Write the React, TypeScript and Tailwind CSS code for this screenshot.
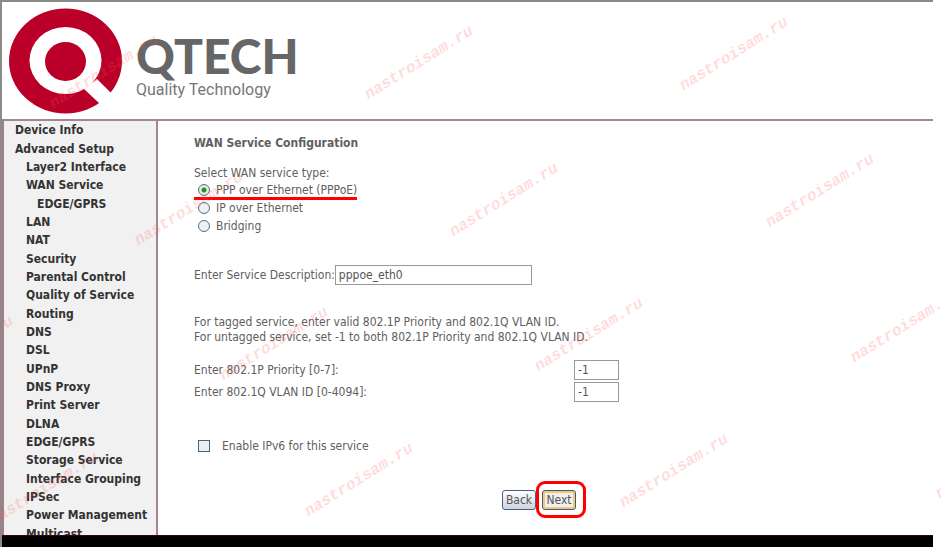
import React, { useState } from 'react';
import { clsx } from 'clsx';

interface MenuItem {
  label: string;
  level: 0 | 1 | 2;
}

const menu: MenuItem[] = [
  { label: 'Device Info', level: 0 },
  { label: 'Advanced Setup', level: 0 },
  { label: 'Layer2 Interface', level: 1 },
  { label: 'WAN Service', level: 1 },
  { label: 'EDGE/GPRS', level: 2 },
  { label: 'LAN', level: 1 },
  { label: 'NAT', level: 1 },
  { label: 'Security', level: 1 },
  { label: 'Parental Control', level: 1 },
  { label: 'Quality of Service', level: 1 },
  { label: 'Routing', level: 1 },
  { label: 'DNS', level: 1 },
  { label: 'DSL', level: 1 },
  { label: 'UPnP', level: 1 },
  { label: 'DNS Proxy', level: 1 },
  { label: 'Print Server', level: 1 },
  { label: 'DLNA', level: 1 },
  { label: 'EDGE/GPRS', level: 1 },
  { label: 'Storage Service', level: 1 },
  { label: 'Interface Grouping', level: 1 },
  { label: 'IPSec', level: 1 },
  { label: 'Power Management', level: 1 },
  { label: 'Multicast', level: 1 },
];

const indent = {
  0: 'pl-[11px]',
  1: 'pl-[22px]',
  2: 'pl-[33px]',
};

const serviceTypes = [
  { value: 'pppoe', label: 'PPP over Ethernet (PPPoE)' },
  { value: 'ipoe', label: 'IP over Ethernet' },
  { value: 'bridge', label: 'Bridging' },
];

// centre points of the watermark stamps
const stamps = [
  [104, 72], [419, 63], [734, 54],
  [189, 209], [504, 200], [820, 191],
  [-41, 353], [274, 344], [589, 335], [905, 326],
  [44, 489], [359, 480], [674, 471], [990, 462],
];

const Watermark: React.FC = () => (
  <div aria-hidden="true" className="pointer-events-none absolute inset-0 overflow-hidden">
    {stamps.map(([x, y]) => (
      <span
        key={`${x}-${y}`}
        className="absolute -translate-x-1/2 -translate-y-1/2 -rotate-[32deg] whitespace-nowrap font-['Liberation_Mono',monospace] text-base font-bold italic leading-5 text-[#ff5050]/20"
        style={{ left: x, top: y }}
      >
        nastroisam.ru
      </span>
    ))}
  </div>
);

const Logo: React.FC = () => (
  <div className="flex items-start gap-3.5">
    <svg width="114" height="106" viewBox="0 0 114 106" className="shrink-0">
      <ellipse cx="57.5" cy="53" rx="56.5" ry="52.5" fill="#ba0029" />
      <ellipse cx="57.5" cy="52.5" rx="36" ry="33.5" fill="#fff" />
      <path d="M89 71 L103 85 L114 96 L104 106 L91 95 L76 81 Z" fill="#fff" />
      <ellipse cx="57.5" cy="53.5" rx="20.5" ry="19.5" fill="#ba0029" />
    </svg>
    <div className="pt-6 text-[#666]">
      <div className="font-['Lato',sans-serif] text-5xl font-black leading-[48px]">QTECH</div>
      <div className="font-['Roboto',sans-serif] text-base leading-5 text-[#777]">Quality Technology</div>
    </div>
  </div>
);

const Sidebar: React.FC = () => (
  <nav className="w-[156px] shrink-0 overflow-hidden border-x-2 border-l-[#a87c88] border-r-[#a88490] bg-[#f1f1f1]">
    <ul className="grid h-[422px] auto-rows-fr text-[#333]">
      {menu.map((item, index) => (
        <li key={index} className={clsx('flex items-center whitespace-nowrap font-bold', indent[item.level])}>
          <a href="#">{item.label}</a>
        </li>
      ))}
    </ul>
  </nav>
);

const fieldClass = 'h-5 border border-[#999] bg-white px-[3px] text-[#555] outline-none';
const buttonClass = 'h-5 w-[34px] rounded-[3px] border text-center text-[#555]';

const WanForm: React.FC = () => {
  const [type, setType] = useState('pppoe');
  const [ipv6, setIpv6] = useState(false);

  return (
    <form className="min-w-0 flex-1 pl-9 pt-3.5" onSubmit={(e) => e.preventDefault()}>
      <h1 className="font-bold leading-4">WAN Service Configuration</h1>

      <fieldset className="mt-3.5">
        <legend className="leading-4">Select WAN service type:</legend>
        {serviceTypes.map((option) => (
          <div key={option.value} className="flex">
            <label className="relative flex h-[18px] items-center gap-1.5 pl-1">
              <input
                type="radio"
                name="serviceType"
                checked={type === option.value}
                onChange={() => setType(option.value)}
                className="size-3 appearance-none rounded-full border border-[#52708c] bg-[#edf1f3] checked:bg-[radial-gradient(circle,#2c8a2c_0_2px,#dff0df_3px)]"
              />
              {option.label}
              {option.value === 'pppoe' && (
                <span className="absolute inset-x-0 top-4 h-[3px] bg-[#f00]" />
              )}
            </label>
          </div>
        ))}
      </fieldset>

      <div className="mt-[30px] flex items-center">
        <label htmlFor="description">Enter Service Description:</label>
        <input id="description" defaultValue="pppoe_eth0" className={clsx(fieldClass, 'w-[197px]')} />
      </div>

      <p className="mt-[30px] leading-[15px]">
        For tagged service, enter valid 802.1P Priority and 802.1Q VLAN ID.
        <br />
        For untagged service, set -1 to both 802.1P Priority and 802.1Q VLAN ID.
      </p>

      <div className="mt-[15px] grid grid-cols-[380px_45px] items-center gap-y-0.5">
        <label htmlFor="priority">Enter 802.1P Priority [0-7]:</label>
        <input id="priority" defaultValue="-1" className={fieldClass} />
        <label htmlFor="vlan">Enter 802.1Q VLAN ID [0-4094]:</label>
        <input id="vlan" defaultValue="-1" className={fieldClass} />
      </div>

      <div className="mt-9 flex">
        <label className="flex items-center gap-3 pl-1">
          <input
            type="checkbox"
            checked={ipv6}
            onChange={(e) => setIpv6(e.target.checked)}
            className="size-3 appearance-none border border-[#3f6780] bg-[#edf0f0] checked:bg-[#2c8a2c]"
          />
          Enable IPv6 for this service
        </label>
      </div>

      <div className="mt-9 flex gap-1.5 pl-[308px]">
        <button type="button" className={clsx(buttonClass, 'border-[#4a6078] bg-linear-to-b from-white to-[#ccd3e0]')}>
          Back
        </button>
        <div className="relative">
          <button
            type="submit"
            className={clsx(buttonClass, 'border-[#4a5a70] bg-[#f0f0f0] shadow-[inset_0_0_0_2px_#f0c878]')}
          >
            Next
          </button>
          <span className="pointer-events-none absolute -left-1.5 -right-2.5 -bottom-2 -top-[9px] rounded-[9px] border-3 border-[#f00]" />
        </div>
      </div>
    </form>
  );
};

export default function App() {
  return (
    <div className="relative h-screen overflow-hidden bg-white pr-2 font-['DejaVu_Sans_Condensed','DejaVu_Sans',sans-serif] text-xs text-[#606060]">
      <div className="flex h-full flex-col border-l-2 border-t-2 border-[#8a8a8a]">
        <header className="flex h-[119px] shrink-0 items-start border-b-2 border-[#a08892] pl-1.5 pt-1.5">
          <Logo />
        </header>
        <div className="flex min-h-0 flex-1">
          <Sidebar />
          <WanForm />
        </div>
        <footer className="h-3 shrink-0 border-t border-[#400010] bg-black" />
      </div>
      <Watermark />
    </div>
  );
}
